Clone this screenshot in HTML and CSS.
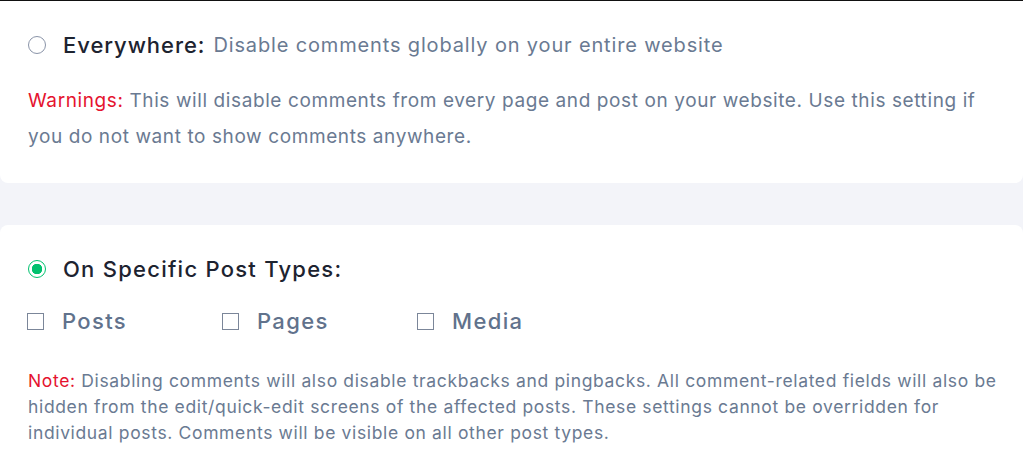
FILE: index.html
```html
<!DOCTYPE html>
<html lang="en">
<head>
    <meta charset="UTF-8">
    <meta name="viewport" content="width=device-width, initial-scale=1.0">
    <title>Disable Comments - Settings</title>
    <link rel="stylesheet" href="styles.css">
</head>
<body>
    <div class="settings">
        <div class="card card-top">
            <label class="option">
                <span class="radio"></span>
                <span class="option-title">Everywhere:</span>
                <span class="option-desc">Disable comments globally on your entire website</span>
            </label>
            <p class="warning"><span class="red">Warnings:</span> This will disable comments from every page and post on your website. Use this setting if you do not want to show comments anywhere.</p>
        </div>

        <div class="card card-bottom">
            <label class="option">
                <span class="radio checked"></span>
                <span class="option-title wide">On Specific Post Types:</span>
            </label>
            <div class="types">
                <label class="type"><span class="box"></span>Posts</label>
                <label class="type"><span class="box"></span>Pages</label>
                <label class="type"><span class="box"></span>Media</label>
            </div>
            <p class="note"><span class="red">Note:</span> Disabling comments will also disable trackbacks and pingbacks. All comment-related fields will also be hidden from the edit/quick-edit screens of the affected posts. These settings cannot be overridden for individual posts. Comments will be visible on all other post types.</p>
        </div>
    </div>
</body>
</html>
```

FILE: styles.css
```css
body {
    font-family: Inter, "Noto Sans", sans-serif;
    margin: 0;
    padding: 0;
    background-color: #f3f4f9;
    border-top: 1px solid #111;
}
.settings {
    display: flex;
    flex-direction: column;
    gap: 42px;
}
.card {
    background: #fff;
    padding: 0 16px 0 28px;
}
.card-top {
    border-radius: 0 0 8px 8px;
    padding-top: 30px;
    height: 152px;
}
.card-bottom {
    border-radius: 8px 8px 0 0;
    padding-top: 30px;
    height: 221px;
}
.option {
    display: flex;
    align-items: center;
    height: 28px;
}
.radio {
    width: 16px;
    height: 16px;
    border: 1.5px solid #8a94a8;
    border-radius: 50%;
    margin-right: 17px;
    flex-shrink: 0;
    box-sizing: content-box;
}
.radio.checked {
    border-color: #00c16e;
    background: radial-gradient(circle, #00c16e 0 5px, #fff 5.5px);
}
.option-title {
    font-size: 22px;
    font-weight: 500;
    letter-spacing: 0.95px;
    color: #1d2330;
    margin-right: 8px;
}
.option-title.wide {
    letter-spacing: 1.25px;
}
.option-desc {
    font-size: 20px;
    letter-spacing: 0.85px;
    color: #6a7a92;
}
.warning {
    margin: 24px 0 0;
    font-size: 19px;
    letter-spacing: 0.6px;
    line-height: 36px;
    color: #6a7a92;
}
.red {
    color: #e5132f;
}
.types {
    display: flex;
    margin-top: 24px;
}
.type {
    display: flex;
    align-items: center;
    width: 195px;
    height: 28px;
    font-size: 22px;
    font-weight: 500;
    letter-spacing: 1.35px;
    color: #61728c;
}
.box {
    width: 15px;
    height: 15px;
    border: 1px solid #7b8699;
    margin: 0 18px 0 -1px;
}
.note {
    margin: 33px 0 0;
    font-size: 17.5px;
    letter-spacing: 0.65px;
    line-height: 26px;
    color: #6a7a92;
}
```
